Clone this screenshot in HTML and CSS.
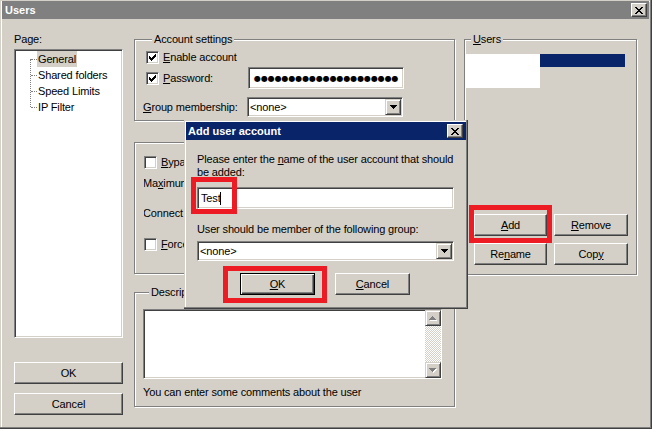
FILE: index.html
```html
<!DOCTYPE html>
<html lang="en">
<head>
    <meta charset="UTF-8">
    <title>Users</title>
    <link rel="stylesheet" href="styles.css">
</head>
<body>

<div class="window">
    <div class="titlebar">
        <span class="caption-text">Users</span>
        <span class="cap-btn">
            <svg width="8" height="7" viewBox="0 0 8 7"><path d="M0 0h2v1H0zM6 0h2v1H6zM1 1h2v1H1zM5 1h2v1H5zM2 2h4v1H2zM3 3h2v1H3zM2 4h4v1H2zM1 5h2v1H1zM5 5h2v1H5zM0 6h2v1H0zM6 6h2v1H6z" fill="#000"/></svg>
        </span>
    </div>

    <div class="content">
        <!-- page tree -->
        <div class="col-left">
            <div class="page-label">Page:</div>
            <div class="tree sunken">
                <ul class="tree-list">
                    <li><span class="sel">General</span></li>
                    <li><span>Shared folders</span></li>
                    <li><span>Speed Limits</span></li>
                    <li><span>IP Filter</span></li>
                </ul>
            </div>
            <div class="left-buttons">
                <button class="btn">OK</button>
                <button class="btn">Cancel</button>
            </div>
        </div>

        <!-- settings -->
        <div class="col-mid">
            <div class="group account">
                <div class="group-title">Account settings</div>
                <div class="row acc-r1">
                    <span class="lead"><span class="check"><svg width="7" height="7" viewBox="0 0 7 7"><path d="M0 2H1V3H2V4H3V3H4V2H5V1H6V0H7V3H6V4H5V5H4V6H3V7H2V6H1V5H0Z" fill="#000"/></svg></span><u>E</u>nable account</span>
                </div>
                <div class="row acc-r2">
                    <span class="lead"><span class="check"><svg width="7" height="7" viewBox="0 0 7 7"><path d="M0 2H1V3H2V4H3V3H4V2H5V1H6V0H7V3H6V4H5V5H4V6H3V7H2V6H1V5H0Z" fill="#000"/></svg></span><u>P</u>assword:</span>
                    <span class="field sunken pass">●●●●●●●●●●●●●●●●●●●●●</span>
                </div>
                <div class="row acc-r3">
                    <span class="lead wide"><u>G</u>roup membership:</span>
                    <span class="combo sunken">
                        <span class="combo-text">&lt;none&gt;</span>
                        <span class="drop"><svg width="7" height="4" viewBox="0 0 7 4"><path d="M0 0H7V1H6V2H5V3H4V4H3V3H2V2H1V1H0Z" fill="#000"/></svg></span>
                    </span>
                </div>
            </div>

            <!-- the dialog hides the rest of these rows -->
            <div class="group limits">
                <div class="row lim-r1">
                    <span class="lead"><span class="check"></span><u>B</u>ypass</span>
                </div>
                <div class="row lim-r2">
                    <span class="text">Ma<u>x</u>imum</span>
                </div>
                <div class="row lim-r3">
                    <span class="text">Connect</span>
                </div>
                <div class="row lim-r4">
                    <span class="lead"><span class="check"></span><u>F</u>orce</span>
                </div>
            </div>

            <div class="group description">
                <div class="group-title">Description</div>
                <div class="memo sunken">
                    <div class="memo-space"></div>
                    <div class="scrollbar">
                        <span class="sb-btn">
                            <svg width="8" height="5" viewBox="0 0 8 5"><path d="M4 1H5V2H6V3H7V4H8V5H1V4H2V3H3V2H4Z" fill="#fff"/><path d="M3 0H4V1H5V2H6V3H7V4H0V3H1V2H2V1H3Z" fill="#808080"/></svg>
                        </span>
                        <span class="sb-track"></span>
                        <span class="sb-btn">
                            <svg width="8" height="5" viewBox="0 0 8 5"><path d="M1 1H8V2H7V3H6V4H5V5H4V4H3V3H2V2H1Z" fill="#fff"/><path d="M0 0H7V1H6V2H5V3H4V4H3V3H2V2H1V1H0Z" fill="#808080"/></svg>
                        </span>
                    </div>
                </div>
                <div class="hint">You can enter some comments about the user</div>
            </div>
        </div>

        <!-- users list -->
        <div class="col-right">
            <div class="group users">
                <div class="group-title"><u>U</u>sers</div>
                <div class="userlist">
                    <span class="ul-white"></span>
                    <span class="ul-sel"></span>
                </div>
                <div class="user-buttons">
                    <button class="btn"><u>A</u>dd</button>
                    <button class="btn"><u>R</u>emove</button>
                    <button class="btn">Re<u>n</u>ame</button>
                    <button class="btn">Cop<u>y</u></button>
                </div>
            </div>
        </div>
    </div>

    <!-- modal dialog -->
    <div class="dialog">
        <div class="dialog-titlebar">
            <span class="caption-text">Add user account</span>
            <span class="cap-btn">
                <svg width="8" height="7" viewBox="0 0 8 7"><path d="M0 0h2v1H0zM6 0h2v1H6zM1 1h2v1H1zM5 1h2v1H5zM2 2h4v1H2zM3 3h2v1H3zM2 4h4v1H2zM1 5h2v1H1zM5 5h2v1H5zM0 6h2v1H0zM6 6h2v1H6z" fill="#000"/></svg>
            </span>
        </div>
        <div class="dialog-body">
            <div class="prompt">Please enter the <u>n</u>ame of the user account that should<br>be added:</div>
            <div class="field sunken name-field"><span>Test</span><span class="caret"></span></div>
            <div class="prompt group-prompt">User should be member of the following group:</div>
            <div class="combo sunken dialog-combo">
                <span class="combo-text">&lt;none&gt;</span>
                <span class="drop"><svg width="7" height="4" viewBox="0 0 7 4"><path d="M0 0H7V1H6V2H5V3H4V4H3V3H2V2H1V1H0Z" fill="#000"/></svg></span>
            </div>
            <div class="dialog-buttons">
                <button class="btn default"><u>O</u>K</button>
                <button class="btn"><u>C</u>ancel</button>
            </div>
        </div>
    </div>

    <!-- red annotation boxes -->
    <div class="mark mark-test"></div>
    <div class="mark mark-add"></div>
    <div class="mark mark-ok"></div>
</div>

</body>
</html>
```

FILE: styles.css
```css
body {
    margin: 0;
    background: #d4d0c8;
    font-family: "Liberation Sans", Arial, sans-serif;
    font-size: 11px;
    line-height: 13px;
    letter-spacing: -0.15px;
    color: #000;
}

u {
    text-underline-offset: 1px;
}

.window {
    position: relative;
    width: 652px;
    height: 429px;
    box-sizing: border-box;
    padding: 1px 3px 2px 2px;
    display: flex;
    flex-direction: column;
    background: #d4d0c8;
    box-shadow: inset -1px -1px #404040, inset -2px -2px #808080, inset 1px 1px #d4d0c8, inset 2px 2px #fff;
}

.titlebar {
    height: 18px;
    display: flex;
    align-items: center;
    justify-content: space-between;
    padding: 0 2px 0 3px;
    background: #808080;
}

.caption-text {
    color: #fff;
    font-weight: bold;
    letter-spacing: 0;
}

.cap-btn {
    width: 16px;
    height: 14px;
    box-sizing: border-box;
    display: flex;
    align-items: center;
    justify-content: center;
    background: #d4d0c8;
    border: 1px solid;
    border-color: #fff #404040 #404040 #fff;
    box-shadow: inset -1px -1px #808080;
}

/* shared widgets */
.btn {
    box-sizing: border-box;
    height: 22px;
    padding: 0;
    background: #d4d0c8;
    border: 1px solid;
    border-color: #fff #404040 #404040 #fff;
    box-shadow: inset -1px -1px #808080;
    font: inherit;
    letter-spacing: inherit;
    color: #000;
}
.btn.default {
    border-color: #000;
    box-shadow: inset 1px 1px #fff, inset -1px -1px #404040, inset -2px -2px #808080;
}

.sunken {
    box-sizing: border-box;
    background: #fff;
    border: 1px solid;
    border-color: #808080 #fff #fff #808080;
    box-shadow: inset 1px 1px #404040, inset -1px -1px #d4d0c8;
}

.check {
    width: 13px;
    height: 13px;
    box-sizing: border-box;
    display: inline-flex;
    align-items: center;
    justify-content: center;
    margin-right: 4px;
    background: #fff;
    border: 1px solid;
    border-color: #808080 #fff #fff #808080;
    box-shadow: inset 1px 1px #404040, inset -1px -1px #d4d0c8;
}

.combo {
    height: 20px;
    display: flex;
    align-items: center;
    padding-left: 2px;
}
.combo-text {
    flex: 1;
}
.drop {
    width: 16px;
    height: 16px;
    box-sizing: border-box;
    margin-right: 1px;
    display: flex;
    align-items: center;
    justify-content: center;
    background: #d4d0c8;
    border: 1px solid;
    border-color: #d4d0c8 #404040 #404040 #d4d0c8;
    box-shadow: inset 1px 1px #fff, inset -1px -1px #808080;
}

.content {
    flex: 1;
    display: flex;
    padding: 14px 0 12px 12px;
}

/* left column */
.col-left {
    width: 109px;
    display: flex;
    flex-direction: column;
}
.tree {
    flex: 1;
    margin-top: 3px;
    padding-top: 1px;
}
.tree-list {
    position: relative;
    list-style: none;
    margin: 0;
    padding: 0;
}
.tree-list::before {
    content: "";
    position: absolute;
    left: 15px;
    top: 8px;
    height: 48px;
    border-left: 1px dotted #808080;
}
.tree-list li {
    position: relative;
    height: 16px;
    line-height: 16px;
    padding-left: 22px;
    white-space: nowrap;
}
.tree-list li::before {
    content: "";
    position: absolute;
    left: 16px;
    top: 8px;
    width: 6px;
    border-top: 1px dotted #808080;
}
.tree-list li span {
    display: inline-block;
    padding: 0 1px;
}
.tree-list .sel {
    background: #d4d0c8;
}
.left-buttons {
    display: flex;
    flex-direction: column;
    gap: 9px;
    margin-top: 24px;
}

/* group boxes */
.group {
    border: 1px solid #808080;
    box-shadow: inset 1px 1px #fff, 1px 1px 0 #fff;
}
.group-title {
    display: table;
    margin: -7px 0 0 6px;
    padding: 0 2px;
    background: #d4d0c8;
}

.col-mid {
    width: 322px;
    margin-left: 11px;
}
.col-right {
    width: 174px;
    margin-left: 8px;
}

.row {
    display: flex;
    align-items: center;
    white-space: nowrap;
}
.lead {
    display: flex;
    align-items: center;
    width: 102px;
}
.lead.wide {
    width: 104px;
    margin-left: -3px;
}

.account {
    width: 321px;
    box-sizing: border-box;
    margin-top: 6px;
    padding: 0 0 3px 11px;
}
.acc-r1 { height: 19px; margin-top: 2px; }
.acc-r2 { height: 22px; }
.acc-r3 { height: 20px; margin-top: 8px; }

.field {
    height: 22px;
    display: flex;
    align-items: center;
    padding-left: 3px;
}
.pass {
    width: 156px;
    padding-left: 5px;
    font-family: "DejaVu Sans", sans-serif;
    font-size: 8px;
    letter-spacing: -0.1px;
}
.acc-r3 .combo {
    width: 156px;
}

.limits {
    width: 321px;
    box-sizing: border-box;
    margin-top: 21px;
    padding: 9px 0 19px 9px;
}
.limits .row {
    width: 40px;
    overflow: hidden;
}
.lim-r1 { height: 20px; }
.lim-r2 { height: 20px; margin-top: 1px; }
.lim-r3 { height: 20px; margin-top: 10px; }
.lim-r4 { height: 20px; margin-top: 11px; }
.limits .lead {
    width: auto;
}
.limits .text {
    margin-left: -1px;
}

.description {
    width: 321px;
    box-sizing: border-box;
    margin-top: 18px;
    padding: 0 0 7px 8px;
}
.memo {
    width: 299px;
    height: 70px;
    margin-top: 10px;
    display: flex;
}
.memo-space {
    flex: 1;
}
.scrollbar {
    width: 16px;
    display: flex;
    flex-direction: column;
}
.sb-btn {
    height: 16px;
    box-sizing: border-box;
    display: flex;
    align-items: center;
    justify-content: center;
    background: #d4d0c8;
    border: 1px solid;
    border-color: #d4d0c8 #404040 #404040 #d4d0c8;
    box-shadow: inset 1px 1px #fff, inset -1px -1px #808080;
}
.sb-track {
    flex: 1;
    background: repeating-conic-gradient(#fff 0 25%, #d4d0c8 0 50%) 0 0 / 2px 2px;
}
.hint {
    margin-top: 7px;
}

/* users group */
.users {
    width: 173px;
    box-sizing: border-box;
    margin-top: 6px;
    padding-bottom: 9px;
}
.userlist {
    display: flex;
    align-items: flex-start;
    margin-top: 8px;
}
.ul-white {
    width: 75px;
    height: 34px;
    background: #fff;
}
.ul-sel {
    width: 85px;
    height: 13px;
    background: #0a246a;
}
.user-buttons {
    display: grid;
    grid-template-columns: 73px 74px;
    gap: 7px;
    margin: 126px 0 0 9px;
}

/* dialog */
.dialog {
    position: absolute;
    left: 184px;
    top: 120px;
    width: 284px;
    height: 189px;
    box-sizing: border-box;
    padding: 2px;
    background: #d4d0c8;
    box-shadow: inset -1px -1px #404040, inset -2px -2px #808080, inset 1px 1px #d4d0c8, inset 2px 2px #fff;
}
.dialog-titlebar {
    height: 18px;
    display: flex;
    align-items: center;
    justify-content: space-between;
    padding: 0 3px 0 2px;
    background: #0a246a;
}
.dialog-body {
    padding: 13px 0 0 11px;
}
.prompt {
    white-space: nowrap;
}
.name-field {
    margin-top: 8px;
    width: 257px;
}
.caret {
    width: 1px;
    height: 13px;
    margin-left: -1px;
    background: #000;
}
.group-prompt {
    margin-top: 14px;
}
.dialog-combo {
    margin-top: 5px;
    width: 257px;
}
.dialog-buttons {
    display: flex;
    gap: 20px;
    margin: 12px 0 0 43px;
}
.dialog-buttons .btn {
    width: 75px;
}

/* annotation marks */
.mark {
    position: absolute;
    box-sizing: border-box;
    border: 5px solid #ed1c24;
}
.mark-test { left: 191px; top: 177px; width: 46px; height: 37px; }
.mark-add  { left: 469px; top: 205px; width: 83px; height: 38px; }
.mark-ok   { left: 223px; top: 266px; width: 104px; height: 37px; }
```
